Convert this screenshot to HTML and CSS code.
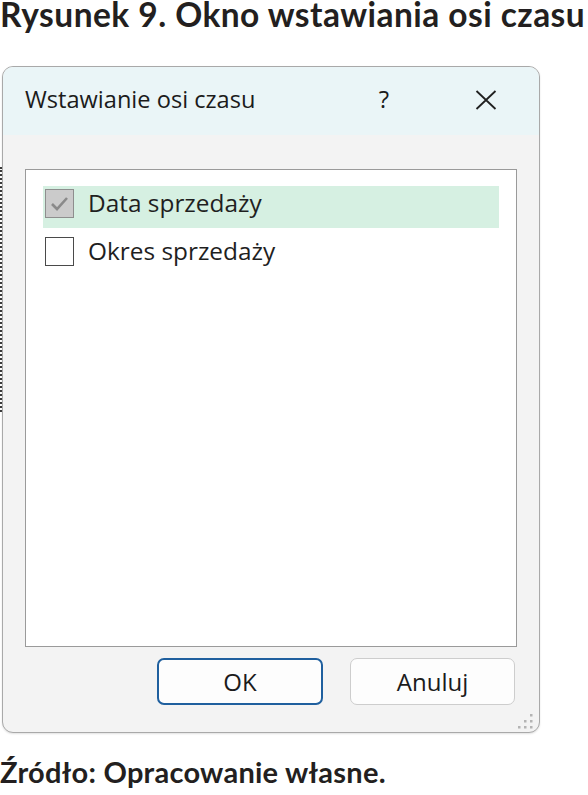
FILE: index.html
```html
<!DOCTYPE html>
<html lang="pl">
<head>
<meta charset="utf-8">
<title>Rysunek 9. Okno wstawiania osi czasu</title>
<link rel="stylesheet" href="styles.css">
</head>
<body>
<h1 class="caption">Rysunek 9. Okno wstawiania osi czasu</h1>
<div class="dialog">
  <div class="titlebar">
    <span class="title">Wstawianie osi czasu</span>
    <div class="title-actions">
      <span class="help">?</span>
      <svg class="close" width="22" height="20" viewBox="0 0 22 20"><path d="M1.5 1L20.5 19M20.5 1L1.5 19" stroke="#202020" stroke-width="1.8" fill="none"/></svg>
    </div>
  </div>
  <div class="body">
    <div class="listbox">
      <div class="row selected">
        <span class="check checked"><svg width="27" height="27" viewBox="0 0 27 27"><path d="M6 14L11 19L21 8" stroke="#8a8a8a" stroke-width="2.6" fill="none"/></svg></span>
        <span class="label">Data sprzedaży</span>
      </div>
      <div class="row">
        <span class="check"></span>
        <span class="label">Okres sprzedaży</span>
      </div>
    </div>
    <div class="buttons">
      <button class="btn primary">OK</button>
      <button class="btn">Anuluj</button>
    </div>
  </div>
  <svg class="grip" width="18" height="18" viewBox="0 0 18 18">
    <rect x="14" y="2" width="2.5" height="2.5" fill="#b4b4b4"/>
    <rect x="14" y="8" width="2.5" height="2.5" fill="#b4b4b4"/>
    <rect x="8" y="8" width="2.5" height="2.5" fill="#b4b4b4"/>
    <rect x="14" y="14" width="2.5" height="2.5" fill="#b4b4b4"/>
    <rect x="8" y="14" width="2.5" height="2.5" fill="#b4b4b4"/>
    <rect x="2" y="14" width="2.5" height="2.5" fill="#b4b4b4"/>
  </svg>
</div>
<p class="source">Źródło: Opracowanie własne.</p>
</body>
</html>
```
FILE: styles.css
```css
* { box-sizing: border-box; }
html, body { margin: 0; padding: 0; background: #ffffff; }
body { width: 588px; height: 795px; overflow: hidden; }

.caption {
  margin: 0 0 38px 0;
  font-family: Lato, "Liberation Sans", sans-serif;
  font-weight: bold;
  font-size: 33.5px;
  line-height: 28px;
  height: 28px;
  letter-spacing: 0.45px;
  color: #231f20;
  white-space: nowrap;
}

.dialog {
  position: relative;
  margin-left: 2px;
  width: 538px;
  height: 667px;
  border: 1px solid #a9a9a9;
  border-radius: 11px;
  background: #f3f3f3;
  font-family: "Open Sans", sans-serif;
  color: #1b1b1b;
  box-shadow: 0 1px 2px rgba(0,0,0,0.12);
}
.dialog::before {
  content: "";
  position: absolute;
  left: -3px;
  top: 100px;
  height: 245px;
  border-left: 2px dotted #3a3a3a;
}

.titlebar {
  height: 68px;
  background: #eaf5f7;
  border-radius: 10px 10px 0 0;
  display: flex;
  align-items: flex-start;
  justify-content: space-between;
  padding: 16px 42px 0 22px;
}
.title {
  font-size: 23.6px;
  line-height: 32px;
}
.title-actions {
  display: flex;
  align-items: center;
  gap: 86px;
  height: 32px;
}
.help {
  font-size: 24px;
  line-height: 32px;
}
.close { display: block; margin-top: 1px; }

.body {
  padding: 34px 22px 0 22px;
}
.listbox {
  height: 478px;
  background: #ffffff;
  border: 1px solid #9a9a9a;
  padding: 16px 17px;
  display: flex;
  flex-direction: column;
  gap: 6px;
}
.row {
  height: 42px;
  display: flex;
  align-items: center;
  padding: 0 0 8px 2px;
  gap: 14px;
}
.row.selected { background: #d6f0e2; }
.check {
  width: 29px;
  height: 29px;
  border: 1.5px solid #4a4a4a;
  background: #ffffff;
  display: flex;
  align-items: center;
  justify-content: center;
  flex: none;
}
.check.checked {
  background: #cbcbcb;
  border-color: #8e8e8e;
}
.check svg { display: block; }
.label {
  font-size: 24.4px;
  line-height: 32px;
  color: #1f1f1f;
}

.buttons {
  margin-top: 11px;
  display: flex;
  justify-content: flex-end;
  gap: 27px;
  padding-right: 2px;
}
.btn {
  height: 47px;
  background: #fdfdfd;
  border: 1px solid #cdcdcd;
  border-radius: 7px;
  font-family: "Open Sans", sans-serif;
  font-size: 24px;
  color: #1b1b1b;
  padding: 0;
  width: 165px;
}
.btn.primary {
  width: 166px;
  border: 2px solid #1f5f9e;
}

.grip {
  position: absolute;
  right: 5px;
  bottom: 2px;
}

.source {
  margin: 24px 0 0 0;
  font-family: Lato, "Liberation Sans", sans-serif;
  font-weight: bold;
  font-size: 29px;
  line-height: 29px;
  letter-spacing: 0.25px;
  color: #231f20;
  white-space: nowrap;
}
```
